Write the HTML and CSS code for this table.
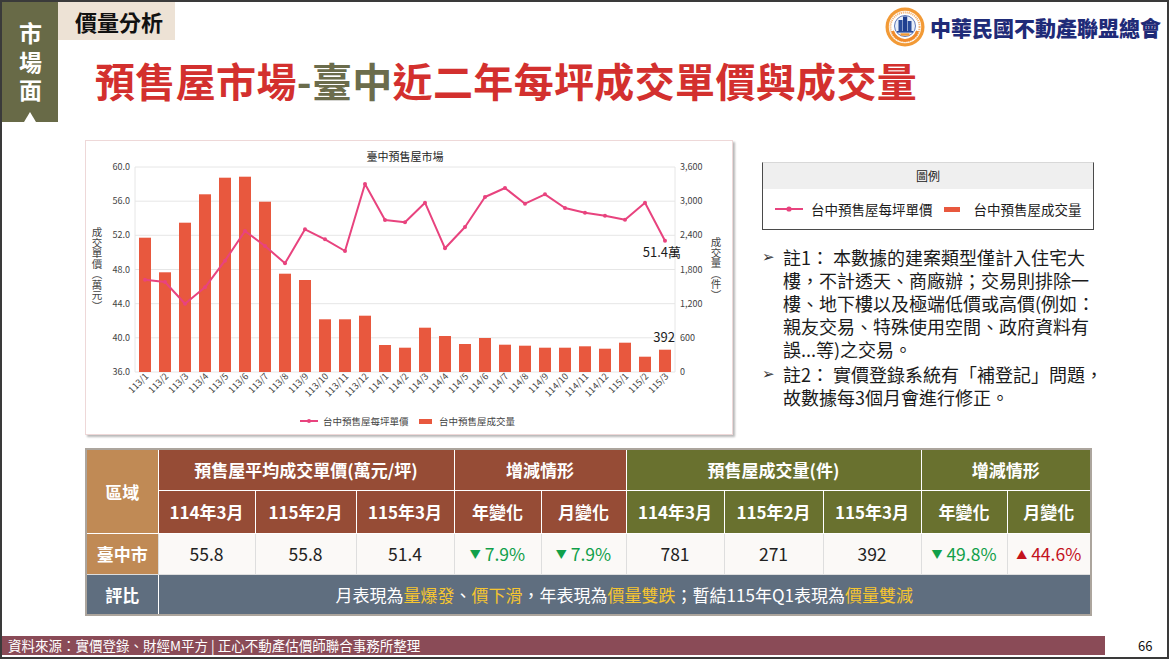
FILE: index.html
```html
<!DOCTYPE html>
<html lang="zh-Hant">
<head>
<meta charset="utf-8">
<title>預售屋市場-臺中近二年每坪成交單價與成交量</title>
<link rel="stylesheet" href="styles.css">
</head>
<body>
<div class="page">
  <div class="top">
    <div class="side-tab">
      <span class="side-text">市場面</span>
      <i class="tri"></i>
    </div>
    <div class="head">
      <div class="head-row">
        <div class="tag">價量分析</div>
        <div class="brand">
          <svg class="logo" width="40" height="40" viewBox="0 0 40 40">
            <circle cx="20" cy="20" r="19.5" fill="#f29a36"/>
            <circle cx="20" cy="20" r="16.2" fill="#fff"/>
            <circle cx="20" cy="20" r="14.6" fill="none" stroke="#f4b77a" stroke-width="2" stroke-dasharray="1.2 0.8"/>
            <path d="M7.5 24 A13 13 0 0 0 32.5 24" fill="none" stroke="#f08a2a" stroke-width="3"/>
            <circle cx="20" cy="19" r="10.5" fill="#e8eef8" stroke="#3a5aa8" stroke-width="0.8"/>
            <rect x="13.5" y="13" width="4" height="11" fill="#2a4c9a"/>
            <rect x="18" y="9.5" width="4.2" height="14.5" fill="#1f3f8f"/>
            <rect x="22.7" y="14" width="3.8" height="10" fill="#2a4c9a"/>
            <rect x="12" y="24" width="16" height="1.6" fill="#2a4c9a"/>
            <rect x="15.5" y="26.3" width="9" height="2.4" fill="#f29a36"/>
          </svg>
          <span class="brand-name">中華民國不動產聯盟總會</span>
        </div>
      </div>
      <h1 class="title">預售屋市場<span class="olive">-臺中</span>近二年每坪成交單價與成交量</h1>
    </div>
  </div>

  <div class="content">
    <div class="chart">
      <svg width="646" height="293" viewBox="0 0 646 293">
        <text class="c-title" x="319" y="20" text-anchor="middle">臺中預售屋市場</text>
        <g class="grid">
          <line x1="49" y1="26" x2="589" y2="26"/>
          <line x1="49" y1="60.2" x2="589" y2="60.2"/>
          <line x1="49" y1="94.3" x2="589" y2="94.3"/>
          <line x1="49" y1="128.5" x2="589" y2="128.5"/>
          <line x1="49" y1="162.7" x2="589" y2="162.7"/>
          <line x1="49" y1="196.8" x2="589" y2="196.8"/>
          <line x1="49" y1="231" x2="589" y2="231"/>
          <line x1="49" y1="26" x2="49" y2="231"/>
          <line x1="589" y1="26" x2="589" y2="231"/>
        </g>
        <g class="ax-l" text-anchor="end">
          <text x="44" y="29">60.0</text>
          <text x="44" y="63.2">56.0</text>
          <text x="44" y="97.3">52.0</text>
          <text x="44" y="131.5">48.0</text>
          <text x="44" y="165.7">44.0</text>
          <text x="44" y="199.8">40.0</text>
          <text x="44" y="234">36.0</text>
        </g>
        <g class="ax-r">
          <text x="594" y="29">3,600</text>
          <text x="594" y="63.2">3,000</text>
          <text x="594" y="97.3">2,400</text>
          <text x="594" y="131.5">1,800</text>
          <text x="594" y="165.7">1,200</text>
          <text x="594" y="199.8">600</text>
          <text x="594" y="234">0</text>
        </g>
        <text class="ax-title" x="11" y="86">成交單價（萬元）</text>
        <text class="ax-title" x="630" y="96">成交量（件）</text>
        <g class="bars">
          <rect x="53" y="96.7" width="12" height="134.3"/>
          <rect x="73" y="131.3" width="12" height="99.7"/>
          <rect x="93" y="81.7" width="12" height="149.3"/>
          <rect x="113" y="53.3" width="12" height="177.7"/>
          <rect x="133" y="36.7" width="12" height="194.3"/>
          <rect x="153" y="35.7" width="12" height="195.3"/>
          <rect x="173" y="60.7" width="12" height="170.3"/>
          <rect x="193" y="132.7" width="12" height="98.3"/>
          <rect x="213" y="139" width="12" height="92"/>
          <rect x="233" y="178.3" width="12" height="52.7"/>
          <rect x="253" y="178.3" width="12" height="52.7"/>
          <rect x="273" y="174.7" width="12" height="56.3"/>
          <rect x="293" y="204" width="12" height="27"/>
          <rect x="313" y="206.7" width="12" height="24.3"/>
          <rect x="333" y="186.7" width="12" height="44.3"/>
          <rect x="353" y="195" width="12" height="36"/>
          <rect x="373" y="203" width="12" height="28"/>
          <rect x="393" y="197" width="12" height="34"/>
          <rect x="413" y="203.7" width="12" height="27.3"/>
          <rect x="433" y="204.7" width="12" height="26.3"/>
          <rect x="453" y="206.7" width="12" height="24.3"/>
          <rect x="473" y="206.7" width="12" height="24.3"/>
          <rect x="493" y="205.3" width="12" height="25.7"/>
          <rect x="513" y="207.7" width="12" height="23.3"/>
          <rect x="533" y="201.7" width="12" height="29.3"/>
          <rect x="553" y="215.7" width="12" height="15.3"/>
          <rect x="573" y="208.7" width="12" height="22.3"/>
        </g>
        <polyline class="pline" points="59,138.7 79,141 99,162.7 119,146.3 139,119.7 159,90 179,105 199,122.3 219,88.3 239,98.3 259,110 279,43 299,79 319,81.3 339,61.7 359,107.3 379,86 399,56 419,47 439,62.7 459,53.3 479,67 499,71.7 519,74.7 539,78.7 559,61.7 579,99.7"/>
        <g class="dots">
          <circle cx="59" cy="138.7" r="2"/><circle cx="79" cy="141" r="2"/><circle cx="99" cy="162.7" r="2"/>
          <circle cx="119" cy="146.3" r="2"/><circle cx="139" cy="119.7" r="2"/><circle cx="159" cy="90" r="2"/>
          <circle cx="179" cy="105" r="2"/><circle cx="199" cy="122.3" r="2"/><circle cx="219" cy="88.3" r="2"/>
          <circle cx="239" cy="98.3" r="2"/><circle cx="259" cy="110" r="2"/><circle cx="279" cy="43" r="2"/>
          <circle cx="299" cy="79" r="2"/><circle cx="319" cy="81.3" r="2"/><circle cx="339" cy="61.7" r="2"/>
          <circle cx="359" cy="107.3" r="2"/><circle cx="379" cy="86" r="2"/><circle cx="399" cy="56" r="2"/>
          <circle cx="419" cy="47" r="2"/><circle cx="439" cy="62.7" r="2"/><circle cx="459" cy="53.3" r="2"/>
          <circle cx="479" cy="67" r="2"/><circle cx="499" cy="71.7" r="2"/><circle cx="519" cy="74.7" r="2"/>
          <circle cx="539" cy="78.7" r="2"/><circle cx="559" cy="61.7" r="2"/><circle cx="579" cy="99.7" r="2"/>
        </g>
        <text class="dlabel" x="595" y="116" text-anchor="end">51.4萬</text>
        <text class="dlabel" x="589" y="201" text-anchor="end">392</text>
        <g class="ax-x" text-anchor="end">
          <text transform="translate(63,236) rotate(-45)">113/1</text>
          <text transform="translate(83,236) rotate(-45)">113/2</text>
          <text transform="translate(103,236) rotate(-45)">113/3</text>
          <text transform="translate(123,236) rotate(-45)">113/4</text>
          <text transform="translate(143,236) rotate(-45)">113/5</text>
          <text transform="translate(163,236) rotate(-45)">113/6</text>
          <text transform="translate(183,236) rotate(-45)">113/7</text>
          <text transform="translate(203,236) rotate(-45)">113/8</text>
          <text transform="translate(223,236) rotate(-45)">113/9</text>
          <text transform="translate(243,236) rotate(-45)">113/10</text>
          <text transform="translate(263,236) rotate(-45)">113/11</text>
          <text transform="translate(283,236) rotate(-45)">113/12</text>
          <text transform="translate(303,236) rotate(-45)">114/1</text>
          <text transform="translate(323,236) rotate(-45)">114/2</text>
          <text transform="translate(343,236) rotate(-45)">114/3</text>
          <text transform="translate(363,236) rotate(-45)">114/4</text>
          <text transform="translate(383,236) rotate(-45)">114/5</text>
          <text transform="translate(403,236) rotate(-45)">114/6</text>
          <text transform="translate(423,236) rotate(-45)">114/7</text>
          <text transform="translate(443,236) rotate(-45)">114/8</text>
          <text transform="translate(463,236) rotate(-45)">114/9</text>
          <text transform="translate(483,236) rotate(-45)">114/10</text>
          <text transform="translate(503,236) rotate(-45)">114/11</text>
          <text transform="translate(523,236) rotate(-45)">114/12</text>
          <text transform="translate(543,236) rotate(-45)">115/1</text>
          <text transform="translate(563,236) rotate(-45)">115/2</text>
          <text transform="translate(583,236) rotate(-45)">115/3</text>
        </g>
        <line class="pline" x1="214" y1="280" x2="232" y2="280"/>
        <circle class="dot1" cx="223" cy="280" r="2"/>
        <text class="c-legend" x="237" y="283.5">台中預售屋每坪單價</text>
        <rect class="bar1" x="333" y="278" width="13" height="5"/>
        <text class="c-legend" x="353" y="283.5">台中預售屋成交量</text>
      </svg>
    </div>

    <div class="side">
      <div class="legend">
        <div class="legend-head">圖例</div>
        <div class="legend-body">
          <svg class="sym-line" width="28" height="8" viewBox="0 0 28 8">
            <line x1="0" y1="4" x2="28" y2="4" stroke="#e8437e" stroke-width="2"/>
            <circle cx="14" cy="4" r="2.6" fill="#e8437e"/>
          </svg>
          <span class="lg-text">台中預售屋每坪單價</span>
          <i class="sym-bar"></i>
          <span class="lg-text lg-text2">台中預售屋成交量</span>
        </div>
      </div>
      <ul class="notes">
        <li>
          <span class="bullet">➢</span>
          <span class="note-text">
            <span class="ln">註1： 本數據的建案類型僅計入住宅大</span>
            <span class="ln">樓，不計透天、商廠辦；交易則排除一</span>
            <span class="ln">樓、地下樓以及極端低價或高價(例如：</span>
            <span class="ln">親友交易、特殊使用空間、政府資料有</span>
            <span class="ln">誤...等)之交易。</span>
          </span>
        </li>
        <li>
          <span class="bullet">➢</span>
          <span class="note-text">
            <span class="ln">註2： 實價登錄系統有「補登記」問題，</span>
            <span class="ln">故數據每3個月會進行修正。</span>
          </span>
        </li>
      </ul>
    </div>
  </div>

  <table class="summary">
    <colgroup>
      <col class="w72"><col class="w97"><col class="w101"><col class="w98"><col class="w87"><col class="w85">
      <col class="w98"><col class="w99"><col class="w98"><col class="w86"><col class="w84">
    </colgroup>
    <tr class="r1">
      <th rowspan="2" class="c-area">區域</th>
      <th colspan="3" class="c-price">預售屋平均成交單價(萬元/坪)</th>
      <th colspan="2" class="c-price">增減情形</th>
      <th colspan="3" class="c-vol">預售屋成交量(件)</th>
      <th colspan="2" class="c-vol">增減情形</th>
    </tr>
    <tr class="r2">
      <th class="c-price">114年3月</th>
      <th class="c-price">115年2月</th>
      <th class="c-price">115年3月</th>
      <th class="c-price">年變化</th>
      <th class="c-price">月變化</th>
      <th class="c-vol">114年3月</th>
      <th class="c-vol">115年2月</th>
      <th class="c-vol">115年3月</th>
      <th class="c-vol">年變化</th>
      <th class="c-vol">月變化</th>
    </tr>
    <tr class="r3">
      <th class="c-area">臺中市</th>
      <td>55.8</td>
      <td>55.8</td>
      <td>51.4</td>
      <td class="down"><span class="arr">▼</span> 7.9%</td>
      <td class="down"><span class="arr">▼</span> 7.9%</td>
      <td>781</td>
      <td>271</td>
      <td>392</td>
      <td class="down"><span class="arr">▼</span> 49.8%</td>
      <td class="up"><span class="arr">▲</span> 44.6%</td>
    </tr>
    <tr class="r4">
      <th class="c-review">評比</th>
      <td colspan="10" class="review">月表現為<em>量爆發</em>、<em>價下滑</em>，年表現為<em>價量雙跌</em>；暫結115年Q1表現為<em>價量雙減</em></td>
    </tr>
  </table>

  <div class="footer">
    <div class="source">資料來源：實價登錄、財經M平方 | 正心不動產估價師聯合事務所整理</div>
    <div class="pageno">66</div>
  </div>
</div>
</body>
</html>
```

FILE: styles.css
```css
* {
  box-sizing: border-box;
  margin: 0;
  padding: 0;
}

body {
  margin: 0;
  background: #fff;
  font-family: "Noto Sans CJK TC", "Noto Sans", sans-serif;
  color: #1b1b1b;
}

.page {
  width: 1169px;
  height: 659px;
  border: 2px solid #3a3a3a;
  display: flex;
  flex-direction: column;
  overflow: hidden;
  background: #fff;
}

/* ---------- top ---------- */
.top {
  display: flex;
  height: 120px;
  flex: none;
}

.side-tab {
  width: 56px;
  background: #686a47;
  color: #fff;
  display: flex;
  flex-direction: column;
  align-items: center;
  padding-top: 20px;
}

.side-text {
  writing-mode: vertical-rl;
  font-size: 23px;
  font-weight: 700;
  letter-spacing: 5.5px;
  line-height: 23px;
}

.tri {
  margin-top: auto;
  width: 0;
  height: 0;
  border-left: 6px solid transparent;
  border-right: 6px solid transparent;
  border-bottom: 10px solid #fff;
}

.head {
  flex: 1;
  display: flex;
  flex-direction: column;
}

.head-row {
  display: flex;
  justify-content: space-between;
  align-items: flex-start;
  height: 38px;
}

.tag {
  width: 117px;
  height: 38px;
  background: #ede2d5;
  font-size: 22px;
  font-weight: 700;
  line-height: 38px;
  padding-left: 17px;
  color: #111;
}

.brand {
  display: flex;
  align-items: center;
  gap: 5px;
  margin-top: 5px;
  margin-right: 6px;
}

.logo {
  display: block;
}

.brand-name {
  font-size: 21px;
  font-weight: 900;
  color: #1f2b78;
  line-height: 30px;
  white-space: nowrap;
}

.title {
  margin: 20px 0 0 37px;
  font-size: 40px;
  line-height: 40px;
  font-weight: 700;
  color: #d3302e;
  letter-spacing: 0.35px;
  white-space: nowrap;
}

.title .olive {
  color: #6b6c4c;
}

/* ---------- content ---------- */
.content {
  display: flex;
  margin-top: 18px;
  padding-left: 83px;
  flex: none;
}

.chart {
  width: 648px;
  height: 295px;
  border: 1px solid #eed8d8;
  box-shadow: 2px 2px 2px rgba(0, 0, 0, 0.28);
  background: #fff;
}

.chart svg {
  display: block;
  font-family: "Noto Sans CJK TC", "Noto Sans", sans-serif;
}

.c-title {
  font-size: 11px;
  fill: #222;
}

.grid line {
  stroke: #e6e6e6;
  stroke-width: 1;
}

.ax-l text,
.ax-r text {
  font-size: 9px;
  fill: #444;
}

.ax-x text {
  font-size: 9px;
  fill: #444;
}

.ax-title {
  font-size: 10.5px;
  fill: #444;
  writing-mode: vertical-rl;
}

.bars rect,
.bar1 {
  fill: #e8583e;
}

.pline {
  fill: none;
  stroke: #e8437e;
  stroke-width: 2;
  stroke-linejoin: round;
}

.dots circle,
.dot1 {
  fill: #e8437e;
}

.dlabel {
  font-size: 13px;
  fill: #1b1b1b;
}

.c-legend {
  font-size: 9.5px;
  fill: #444;
}

.side {
  margin-left: 29px;
  width: 332px;
  padding-top: 22px;
}

.legend {
  border: 1px solid #4a4a4a;
  border-top-color: #d8d8d8;
  height: 68px;
}

.legend-head {
  height: 26px;
  background: #efefef;
  text-align: center;
  font-size: 12px;
  line-height: 26px;
  color: #222;
}

.legend-body {
  display: flex;
  align-items: center;
  height: 40px;
  padding-left: 12px;
  font-size: 13.5px;
  color: #1b1b1b;
}

.sym-line {
  display: block;
  flex: none;
}

.lg-text {
  margin-left: 8px;
  white-space: nowrap;
}

.sym-bar {
  width: 16px;
  height: 5px;
  background: #e8583e;
  margin-left: 11px;
  flex: none;
}

.lg-text2 {
  margin-left: 14px;
}

.notes {
  list-style: none;
  margin-top: 16px;
  font-size: 18px;
  line-height: 23px;
  color: #1b1b1b;
}

.notes li {
  display: flex;
}

.notes li + li {
  margin-top: 2px;
}

.bullet {
  width: 21px;
  flex: none;
  font-family: "DejaVu Sans", sans-serif;
  font-size: 15px;
  color: #333;
}

.note-text {
  display: flex;
  flex-direction: column;
}

.ln {
  white-space: nowrap;
}

/* ---------- table ---------- */
.summary {
  margin: 13px 0 0 83px;
  width: 1005px;
  border-collapse: collapse;
  table-layout: fixed;
  border: 2px solid #aca59d;
  flex: none;
}

.w72 { width: 72px; }
.w97 { width: 97px; }
.w101 { width: 101px; }
.w98 { width: 98px; }
.w87 { width: 87px; }
.w85 { width: 85px; }
.w99 { width: 99px; }
.w86 { width: 86px; }
.w84 { width: 84px; }

.summary th,
.summary td {
  text-align: center;
  vertical-align: middle;
  padding: 0;
  white-space: nowrap;
}

.summary th {
  color: #fff;
  font-weight: 700;
  font-size: 17px;
  border: 1px solid #fff;
}

.r1 th { height: 41px; }
.r2 th { height: 43px; }
.r3 th,
.r3 td { height: 41px; }
.r4 th,
.r4 td { height: 41px; }

.c-area { background: #c08a55; }
.c-price { background: #964c36; }
.c-vol { background: #69712f; }

.r3 th.c-area {
  border-color: #ddd;
}

.summary td {
  background: #fbf9f7;
  border: 1px solid #dedede;
  font-size: 17.5px;
  color: #222;
}

.summary td.down { color: #11a04a; }
.summary td.up { color: #c4121c; }

.arr {
  font-size: 11px;
  vertical-align: 2px;
}

.c-review {
  background: #5f6e7f;
}

.summary td.review {
  background: #5f6e7f;
  color: #fff;
  font-size: 17px;
  border-color: #5f6e7f;
}

.review em {
  font-style: normal;
  color: #f5c531;
}

/* ---------- footer ---------- */
.footer {
  margin-top: auto;
  margin-bottom: 2px;
  display: flex;
  align-items: center;
  height: 19px;
  flex: none;
}

.source {
  width: 1103px;
  height: 19px;
  background: #8a4b57;
  color: #fff;
  font-size: 13.5px;
  line-height: 19px;
  padding-left: 6px;
  white-space: nowrap;
}

.pageno {
  padding-left: 33px;
  font-size: 13px;
  color: #111;
}
```
